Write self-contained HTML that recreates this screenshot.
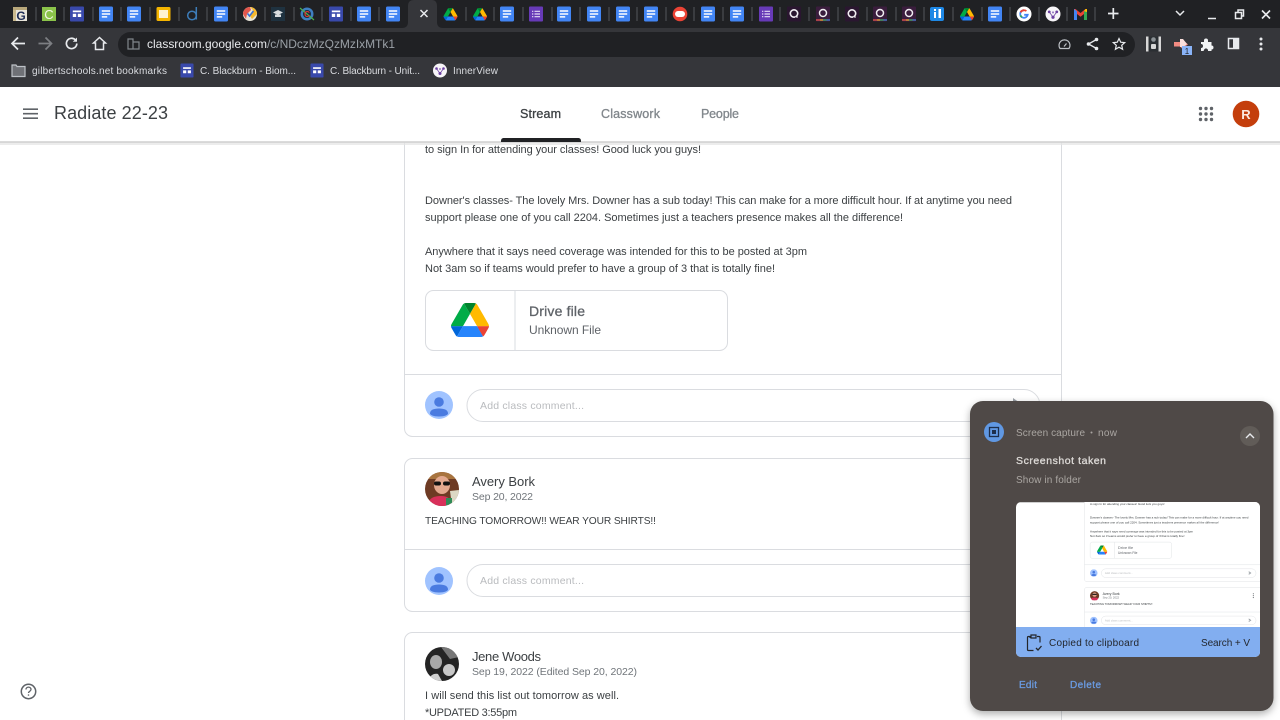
<!DOCTYPE html>
<html lang="en"><head><meta charset="utf-8"><title>Radiate 22-23</title>
<style>
html,body{margin:0;padding:0;width:1280px;height:720px;overflow:hidden;background:#fff}
svg{display:block;filter:blur(.35px)}
text{font-family:"Liberation Sans",sans-serif;white-space:pre}
.b{font-size:11px;fill:#3c4043}
.ph{font-size:10.5px;fill:#b9bbbe}
.n{font-size:13px;fill:#3c4043}
.d{font-size:10.5px;fill:#70757a}
.bm{font-size:10px;fill:#dadce0}
.sep{stroke:#55575b;stroke-width:1}
.nt{font-size:10px;fill:#aaa6a2}
.m{stroke-width:.3px;paint-order:stroke}
</style></head><body>
<svg xmlns="http://www.w3.org/2000/svg" width="1280" height="720" viewBox="0 0 1280 720">
<defs>
<symbol id="doc" viewBox="0 0 14 15"><rect width="14" height="15" rx="1.5" fill="#4285f4"/><path d="M2.800 3.800h8.400v1.500H2.800zM2.800 6.700h8.400v1.500H2.800zM2.800 9.600h5.400v1.500H2.800z" fill="#fff"/></symbol>
<symbol id="site" viewBox="0 0 14 15"><rect width="14" height="15" rx="1" fill="#3949ab"/><path d="M2.800 4h8.400v1.800H2.800zM2.800 7.300h3.400v3.200H2.800zM7.800 7.300h3.400v3.200H7.800z" fill="#fff"/></symbol>
<symbol id="form" viewBox="0 0 14 15"><rect width="14" height="15" rx="1" fill="#673ab7"/><path d="M5.500 4.200H11v1.200H5.500zM5.500 6.900H11v1.200H5.500zM5.500 9.600H11v1.200H5.500zM3 4.200h1.300v1.200H3zM3 6.900h1.300v1.200H3zM3 9.600h1.300v1.200H3z" fill="#e6dcf5"/></symbol>
<symbol id="q" viewBox="0 0 14 15"><rect width="14" height="15" rx="1" fill="#2a1630"/><circle cx="7" cy="7" r="3.700" fill="none" stroke="#f1eef2" stroke-width="1.600"/><path d="M8.500 10.300h2v1.400h-2z" fill="#2a1630"/><circle cx="10" cy="10.500" r=".8" fill="#fff"/></symbol>
<symbol id="qb" viewBox="0 0 14 15"><rect width="14" height="15" rx="1" fill="#3a1d3d"/><circle cx="7" cy="6.500" r="3.500" fill="none" stroke="#f1eef2" stroke-width="1.500"/><path d="M0 12.800h4v1.400H0z" fill="#d9534f"/><path d="M4 12.800h3v1.400H4z" fill="#e9a13b"/><path d="M7 12.800h3.500v1.400H7z" fill="#4aa56b"/><path d="M10.500 12.800H14v1.400h-3.500z" fill="#4a78c9"/></symbol>
<symbol id="dr" viewBox="0 0 87.300 78">
<path d="m6.600 66.850 3.850 6.650c.8 1.400 1.950 2.500 3.300 3.300l13.750-23.800h-27.500c0 1.550.4 3.100 1.200 4.500z" fill="#0066da"/>
<path d="m43.650 25-13.750-23.800c-1.350.8-2.500 1.900-3.300 3.300l-25.400 44a9.060 9.060 0 0 0 -1.200 4.500h27.500z" fill="#00ac47"/>
<path d="m73.550 76.800c1.350-.8 2.500-1.900 3.300-3.300l1.600-2.750 7.650-13.250c.8-1.400 1.200-2.950 1.200-4.500h-27.502l5.852 11.500z" fill="#ea4335"/>
<path d="m43.650 25 13.750-23.800c-1.350-.8-2.900-1.200-4.500-1.200h-18.500c-1.600 0-3.150.45-4.500 1.200z" fill="#00832d"/>
<path d="m59.800 53h-32.300l-13.750 23.800c1.350.8 2.900 1.200 4.500 1.200h50.800c1.600 0 3.150-.45 4.500-1.200z" fill="#2684fc"/>
<path d="m73.400 26.500-12.700-22c-.8-1.400-1.950-2.500-3.300-3.300l-13.750 23.800 16.150 28h27.450c0-1.550-.4-3.100-1.200-4.500z" fill="#ffba00"/>
</symbol>
<symbol id="usr" viewBox="0 0 28 28"><circle cx="14" cy="14" r="14" fill="#a0c3ff"/><circle cx="14" cy="11" r="4.800" fill="#4a7be0"/><path d="M5 22.500c0-3.200 3-5 9-5s9 1.800 9 5c0 1.300-3 3-9 3s-9-1.700-9-3z" fill="#4a7be0"/></symbol>
<symbol id="inner" viewBox="0 0 14 14"><circle cx="7" cy="7" r="7" fill="#f7f5f8"/><circle cx="3.500" cy="5" r="1.300" fill="#6b3fa0"/><circle cx="10.500" cy="5" r="1.300" fill="#6b3fa0"/><circle cx="7" cy="10" r="1.500" fill="#6b3fa0"/><circle cx="7" cy="5.500" r="1" fill="#9a7cc4"/><path d="M3.500 5 7 10l3.500-5" fill="none" stroke="#6b3fa0" stroke-width=".7"/></symbol>
<clipPath id="th"><rect x="1016" y="502" width="244" height="155" rx="5"/></clipPath>
<filter id="sh" x="-10%" y="-10%" width="120%" height="120%"><feDropShadow dx="0" dy="3" stdDeviation="4" flood-color="#000" flood-opacity=".32"/></filter>
<clipPath id="c1"><circle cx="442" cy="489" r="17"/></clipPath>
<clipPath id="c2"><circle cx="442" cy="664" r="17"/></clipPath>
</defs>

<rect width="1280" height="720" fill="#fff"/>

<!-- page content -->
<rect x="404.500" y="100" width="657" height="336.500" rx="8" fill="#fff" stroke="#dadce0"/>
<text class="b" x="425" y="153" textLength="276">to sign In for attending your classes! Good luck you guys!</text>
<text class="b" x="425" y="204" textLength="587">Downer's classes- The lovely Mrs. Downer has a sub today! This can make for a more difficult hour. If at anytime you need</text>
<text class="b" x="425" y="221" textLength="478">support please one of you call 2204. Sometimes just a teachers presence makes all the difference!</text>
<text class="b" x="425" y="255" textLength="382">Anywhere that it says need coverage was intended for this to be posted at 3pm</text>
<text class="b" x="425" y="272" textLength="350">Not 3am so if teams would prefer to have a group of 3 that is totally fine!</text>
<rect x="425.500" y="290.500" width="302" height="60" rx="8" fill="#fff" stroke="#dadce0"/>
<path d="M515 291v59" stroke="#dadce0"/>
<use href="#dr" x="451" y="303" width="38" height="34"/>
<text class="m" x="529" y="316" textLength="56" stroke="#5f6368" style="font-size:14px;fill:#5f6368">Drive file</text>
<text x="529" y="334" textLength="72" style="font-size:12px;fill:#5f6368">Unknown File</text>
<path d="M405 374.500h656" stroke="#dadce0"/>
<use href="#usr" x="425" y="391" width="28" height="28"/>
<rect x="467" y="389.500" width="573" height="32" rx="16" fill="#fff" stroke="#dadce0"/>
<text class="ph" x="480" y="409" textLength="104">Add class comment...</text>
<path d="M1013 398l10 7-10 7v-5l5-2-5-2z" fill="#9aa0a6"/>

<rect x="404.500" y="458.500" width="657" height="153" rx="8" fill="#fff" stroke="#dadce0"/>
<g clip-path="url(#c1)"><rect x="425" y="472" width="34" height="34" fill="#6e3b24"/><path d="M425 472h34v7h-34z" fill="#a8743f"/><ellipse cx="442" cy="485" rx="8" ry="9" fill="#e3a98f"/><rect x="434" y="481.500" width="7" height="4" rx="2" fill="#111"/><rect x="443" y="481.500" width="7" height="4" rx="2" fill="#111"/><path d="M428 506c0-8 6-10 13-10s11 3 11 10z" fill="#d8305a"/><path d="M450 491l9-1v16h-7z" fill="#dcd8c4"/><path d="M446 498h6v8h-6z" fill="#2e8b57"/></g>
<text class="n" x="472" y="486" textLength="63">Avery Bork</text>
<text class="d" x="472" y="500" textLength="61">Sep 20, 2022</text>
<text class="b" x="425" y="524" textLength="231" style="font-size:10.200px">TEACHING TOMORROW!! WEAR YOUR SHIRTS!!</text>
<path d="M405 549.500h656" stroke="#dadce0"/>
<use href="#usr" x="425" y="567" width="28" height="28"/>
<rect x="467" y="564.500" width="573" height="32" rx="16" fill="#fff" stroke="#dadce0"/>
<text class="ph" x="480" y="584" textLength="104">Add class comment...</text>

<rect x="404.500" y="632.500" width="657" height="120" rx="8" fill="#fff" stroke="#dadce0"/>
<g clip-path="url(#c2)"><rect x="425" y="647" width="34" height="34" fill="#242424"/><ellipse cx="436" cy="662" rx="6" ry="7" fill="#a8a8a8"/><ellipse cx="449" cy="670" rx="6" ry="6" fill="#c8c8c8"/><path d="M441 647h18v10l-9 2z" fill="#777"/><path d="M428 681c2-6 6-8 10-7l4 7z" fill="#d0d0d0"/></g>
<text class="n" x="472" y="661" textLength="69">Jene Woods</text>
<text class="d" x="472" y="675" textLength="165">Sep 19, 2022 (Edited Sep 20, 2022)</text>
<text class="b" x="425" y="699" textLength="194">I will send this list out tomorrow as well.</text>
<text class="b" x="425" y="716" textLength="92">*UPDATED 3:55pm</text>

<circle cx="28.500" cy="691.500" r="7.200" fill="none" stroke="#5f6368" stroke-width="1.500"/>
<path d="M26 689.500c0-3.200 5-3.200 5 0 0 1.800-2.500 1.800-2.500 3.500" fill="none" stroke="#5f6368" stroke-width="1.300"/><circle cx="28.500" cy="695" r=".8" fill="#5f6368"/>

<!-- classroom header -->
<rect x="0" y="142" width="1280" height="3" fill="#e4e4e4" opacity=".7"/>
<rect x="0" y="87" width="1280" height="55" fill="#fff"/>
<path d="M0 142h1280" stroke="#cfcfcf" stroke-width="1.500"/>
<path d="M23 109.200h15M23 113.700h15M23 118.200h15" stroke="#5f6368" stroke-width="1.700"/>
<text x="54" y="119" textLength="114" style="font-size:18px;fill:#3c4043">Radiate 22-23</text>
<text class="m" x="520" y="118" textLength="41" stroke="#3c4043" style="font-size:12.500px;fill:#3c4043">Stream</text>
<text class="m" x="601" y="118" textLength="59" stroke="#80868b" style="font-size:12.500px;fill:#80868b">Classwork</text>
<text class="m" x="701" y="118" textLength="38" stroke="#80868b" style="font-size:12.500px;fill:#80868b">People</text>
<path d="M501 142v-1c0-2 1-3 3-3h74c2 0 3 1 3 3v1z" fill="#202124"/>
<g fill="#5f6368"><circle cx="1200.500" cy="108.500" r="1.700"/><circle cx="1206" cy="108.500" r="1.700"/><circle cx="1211.500" cy="108.500" r="1.700"/><circle cx="1200.500" cy="114" r="1.700"/><circle cx="1206" cy="114" r="1.700"/><circle cx="1211.500" cy="114" r="1.700"/><circle cx="1200.500" cy="119.500" r="1.700"/><circle cx="1206" cy="119.500" r="1.700"/><circle cx="1211.500" cy="119.500" r="1.700"/></g>
<circle cx="1246" cy="114" r="13.300" fill="#c43e0c"/>
<text x="1246" y="119" text-anchor="middle" style="font-size:13px;font-weight:bold;fill:#fbe9e0">R</text>

<!-- browser chrome -->
<rect width="1280" height="28" fill="#202124"/>
<rect y="28" width="1280" height="59" fill="#35363a"/>
<path d="M402 28c4 0 6-2 6-6V6c0-4 2-6 6-6h18c3 0 5 2 5 6v16c0 4 2 6 6 6z" fill="#35363a"/>
<path d="M420.500 10l7 7m0-7l-7 7" stroke="#e8eaed" stroke-width="1.500"/>
<path class="sep" d="M36 7v14M64 7v14M93 7v14M121 7v14M150 7v14M179 7v14M207 7v14M236 7v14M265 7v14M294 7v14M322 7v14M351 7v14M379 7v14M466 7v14M494 7v14M523 7v14M552 7v14M580 7v14M609 7v14M637 7v14M666 7v14M694 7v14M723 7v14M752 7v14M780 7v14M809 7v14M838 7v14M867 7v14M896 7v14M924 7v14M953 7v14M982 7v14M1010 7v14M1039 7v14M1067 7v14M1095 7v14"/>

<rect x="13" y="7" width="14" height="14" fill="#e9e5da"/><path d="M13 7h14v3H13z" fill="#b8a77a"/><path d="M13 10h3v11h-3z" fill="#c9b98e"/><text x="21" y="20" text-anchor="middle" style="font-size:12px;font-weight:bold;fill:#1d2c55">G</text>
<rect x="42" y="7" width="14" height="14" fill="#8bc34a"/><text x="49" y="19" text-anchor="middle" style="font-size:13px;fill:#f4f9ea">C</text>
<use href="#site" x="70" y="6.500" width="14" height="15"/>
<use href="#doc" x="99" y="6.500" width="14" height="15"/>
<use href="#doc" x="127" y="6.500" width="14" height="15"/>
<rect x="156.500" y="7" width="14" height="14" rx="1.500" fill="#f4b400"/><rect x="159" y="10" width="9" height="8" fill="#fff3d0"/>
<circle cx="192" cy="15.500" r="4.300" fill="none" stroke="#3d7cb8" stroke-width="1.500"/><path d="M196.300 7v12.500" stroke="#3d7cb8" stroke-width="1.500"/>
<use href="#doc" x="214" y="6.500" width="14" height="15"/>
<circle cx="250" cy="14" r="7" fill="#e8e4d8"/><path d="M243 14a7 7 0 0 1 7-7l1 3-4 4-1 5z" fill="#e2574c"/><path d="M250 7a7 7 0 0 1 7 7l-5 5-2-3 3-6z" fill="#f5b82e"/><path d="M247.500 13.500l2 2.500 4-5" fill="none" stroke="#3b6fd4" stroke-width="1.600"/>
<rect x="271" y="7" width="14" height="14" fill="#1f3240"/><path d="M273 12.500l5-2.500 5 2.500-5 2.500z" fill="#d9dde0"/><path d="M275 14.500v2.500h6v-2.500" fill="#d9dde0"/>
<circle cx="307" cy="14" r="6.500" fill="#3f7fc2"/><circle cx="307" cy="14" r="4" fill="#1c2a3a"/><path d="M300 8l14 12" stroke="#4caf50" stroke-width="1.200"/><text x="307" y="17" text-anchor="middle" style="font-size:8px;font-weight:bold;fill:#e53935">C</text>
<use href="#site" x="329" y="6.500" width="14" height="15"/>
<use href="#doc" x="357" y="6.500" width="14" height="15"/>
<use href="#doc" x="386" y="6.500" width="14" height="15"/>
<use href="#dr" x="443.500" y="8" width="14" height="12.500"/>
<use href="#dr" x="473" y="8" width="14" height="12.500"/>
<use href="#doc" x="500" y="6.500" width="14" height="15"/>
<use href="#form" x="529" y="6.500" width="14" height="15"/>
<use href="#doc" x="557" y="6.500" width="14" height="15"/>
<use href="#doc" x="587" y="6.500" width="14" height="15"/>
<use href="#doc" x="616" y="6.500" width="14" height="15"/>
<use href="#doc" x="644" y="6.500" width="14" height="15"/>
<circle cx="680" cy="14" r="7.300" fill="#ea4335"/><rect x="675" y="11" width="10" height="6" rx="3" fill="#fff"/>
<use href="#doc" x="701" y="6.500" width="14" height="15"/>
<use href="#doc" x="730" y="6.500" width="14" height="15"/>
<use href="#form" x="759" y="6.500" width="14" height="15"/>
<use href="#q" x="787" y="6.500" width="14" height="15"/>
<use href="#qb" x="816" y="6.500" width="14" height="15"/>
<use href="#q" x="845" y="6.500" width="14" height="15"/>
<use href="#qb" x="873" y="6.500" width="14" height="15"/>
<use href="#qb" x="902" y="6.500" width="14" height="15"/>
<rect x="930" y="7" width="14" height="14" rx="2" fill="#1e88e5"/><path d="M934 12h2v6h-2zM934 9h2v2h-2zM938.500 9h2.500v9h-2.500z" fill="#fff"/>
<use href="#dr" x="960" y="8" width="14" height="12.500"/>
<use href="#doc" x="988" y="6.500" width="14" height="15"/>
<circle cx="1024" cy="14" r="7.500" fill="#fff"/><path d="M1024 10.200a3.800 3.800 0 1 0 3.700 4.600h-3.500" fill="none" stroke="#4285f4" stroke-width="1.800"/><path d="M1020.600 12.300a3.800 3.800 0 0 1 5.800-1.200" fill="none" stroke="#ea4335" stroke-width="1.800"/><path d="M1020.400 15.500l1.500 1.800" stroke="#34a853" stroke-width="1.800"/>
<use href="#inner" x="1045.500" y="6.500" width="15" height="15"/>
<path d="M1074 20V9h1.500l5 4 5-4h1.500v11h-3v-6l-3.500 2.800-3.500-2.800v6z" fill="#ea4335"/><path d="M1074 20V9l3 2.200V20z" fill="#4285f4"/><path d="M1087 20V9l-3 2.200V20z" fill="#34a853"/><path d="M1084 11.200L1085.500 9h1.500v3z" fill="#fbbc04"/>
<path d="M1108 13.500h10.500M1113.300 8v11" stroke="#e8eaed" stroke-width="1.700"/>
<path d="M1176 11l4 4 4-4" fill="none" stroke="#e8eaed" stroke-width="1.500"/>
<path d="M1208 18.500h8" stroke="#e8eaed" stroke-width="1.500"/>
<path d="M1235.500 12.500h6v6h-6zM1238 12.500v-2.500h5.500v6h-2" fill="none" stroke="#e8eaed" stroke-width="1.500"/>
<path d="M1262 10.500l8 8m0-8l-8 8" stroke="#e8eaed" stroke-width="1.600"/>

<path d="M25 43.500H12.500M18 37.500l-6 6 6 6" fill="none" stroke="#e8eaed" stroke-width="1.700"/>
<path d="M38.500 43.500H51M45.500 37.500l6 6-6 6" fill="none" stroke="#7d7f83" stroke-width="1.700"/>
<path d="M76.800 43.500a5.200 5.200 0 1 1-1.500-3.700" fill="none" stroke="#e8eaed" stroke-width="1.700"/><path d="M77 37.500v4.200h-4.200z" fill="#e8eaed"/>
<path d="M93.500 43l6-5.500 6 5.500h-2v6.500h-8V43z" fill="none" stroke="#e8eaed" stroke-width="1.500"/>

<rect x="118" y="32" width="1017" height="25" rx="12.500" fill="#202124"/>
<path d="M128 39h5v10h-5zM133 42h6v7h-6z" fill="none" stroke="#80868b" stroke-width="1.200"/>
<text x="147" y="48" textLength="120" style="font-size:12px;fill:#e8eaed">classroom.google.com</text>
<text x="267" y="48" textLength="128" style="font-size:12px;fill:#9aa0a6">/c/NDczMzQzMzIxMTk1</text>
<path d="M1060 48.500a5.500 5.500 0 1 1 9 0z" fill="none" stroke="#bdc1c6" stroke-width="1.200"/><path d="M1064 46.500l2.500-3" stroke="#bdc1c6" stroke-width="1.200"/>
<path d="M1096.500 39.500l-8 4.500 8 4.500" fill="none" stroke="#e8eaed" stroke-width="1.300"/><circle cx="1096.500" cy="39.500" r="1.800" fill="#e8eaed"/><circle cx="1088.500" cy="44" r="1.800" fill="#e8eaed"/><circle cx="1096.500" cy="48.500" r="1.800" fill="#e8eaed"/>
<path d="M1119 38.500l1.700 3.700 4 .4-3 2.700.9 4-3.600-2.100-3.600 2.100.9-4-3-2.700 4-.4z" fill="none" stroke="#e8eaed" stroke-width="1.200"/>

<rect x="1146" y="36.500" width="15" height="15" fill="#d7d7d7"/><rect x="1148.500" y="36.500" width="10" height="15" fill="#2b2f33"/><circle cx="1153.500" cy="39.500" r="2.300" fill="#8c9296"/><rect x="1151" y="44" width="5" height="5" rx="1" fill="#d7d7d7"/>
<path d="M1174 42h6l2-3 6 5.500-6 4-2-2h-6z" fill="#f28b82"/><path d="M1180 39h3l4 5-4 3h-3z" fill="#fbe0dd"/>
<rect x="1182" y="46" width="10" height="9" fill="#8ab4f8"/><text x="1187" y="54" text-anchor="middle" style="font-size:8px;fill:#202124">1</text>
<path d="M1201 42h3v-1.500a2 2 0 0 1 4 0V42h3.500v3.500a2 2 0 0 1 0 4V51H1208a2 2 0 0 0-4-1l-.5 1H1201v-3a2 2 0 0 0 0-4z" fill="#f1f3f4"/>
<rect x="1228.500" y="38.500" width="10" height="10" fill="none" stroke="#e8eaed" stroke-width="1.500"/><rect x="1233" y="38.500" width="5.500" height="10" fill="#e8eaed"/>
<g fill="#e8eaed"><circle cx="1261" cy="39" r="1.500"/><circle cx="1261" cy="44" r="1.500"/><circle cx="1261" cy="49" r="1.500"/></g>

<path d="M12 65h4l1 1.500h8v10H12z" fill="#6f7176" stroke="#bdc1c6" stroke-width="1.200"/>
<text class="bm" x="32" y="74" textLength="135">gilbertschools.net bookmarks</text>
<use href="#site" x="180" y="63.500" width="14" height="14"/>
<text class="bm" x="200" y="74" textLength="96">C. Blackburn - Biom...</text>
<use href="#site" x="310" y="63.500" width="14" height="14"/>
<text class="bm" x="330" y="74" textLength="90">C. Blackburn - Unit...</text>
<use href="#inner" x="433" y="63.500" width="14" height="14"/>
<text class="bm" x="453" y="74" textLength="45">InnerView</text>

<!-- notification -->
<rect x="970" y="401" width="303.500" height="310" rx="13" fill="#4f4a46" filter="url(#sh)"/>
<circle cx="994" cy="432" r="10" fill="#6098e3"/><rect x="989.500" y="427.500" width="9" height="9" fill="none" stroke="#1d2f4d" stroke-width="1.300"/><rect x="992" y="430" width="4" height="4" fill="#1d2f4d"/>
<text class="nt" x="1016" y="436" textLength="69">Screen capture</text>
<circle cx="1091.500" cy="432.500" r="1" fill="#aaa6a2"/>
<text class="nt" x="1098" y="436" textLength="19">now</text>
<circle cx="1250" cy="436" r="10" fill="#615c58"/><path d="M1246 438l4-4 4 4" fill="none" stroke="#e8eaed" stroke-width="1.400"/>
<text class="m" x="1016" y="464" textLength="90" stroke="#dedbd8" style="font-size:10.500px;fill:#dedbd8">Screenshot taken</text>
<text class="nt" x="1016" y="483" textLength="65">Show in folder</text>

<g clip-path="url(#th)">
<rect x="1016" y="502" width="244" height="155" fill="#fff"/>
<path d="M1016 502.500h244" stroke="#cfcfcf"/>
<rect x="1088" y="501" width="22" height="2" fill="#555"/>
<g transform="translate(975.230 463.660) scale(.27)">
<rect x="404.500" y="100" width="657" height="336.500" rx="8" fill="#fff" stroke="#dadce0" stroke-width="1.500"/>
<text class="b" x="425" y="153" textLength="276">to sign In for attending your classes! Good luck you guys!</text>
<text class="b" x="425" y="204" textLength="587">Downer's classes- The lovely Mrs. Downer has a sub today! This can make for a more difficult hour. If at anytime you need</text>
<text class="b" x="425" y="221" textLength="478">support please one of you call 2204. Sometimes just a teachers presence makes all the difference!</text>
<text class="b" x="425" y="255" textLength="382">Anywhere that it says need coverage was intended for this to be posted at 3pm</text>
<text class="b" x="425" y="272" textLength="350">Not 3am so if teams would prefer to have a group of 3 that is totally fine!</text>
<rect x="425.500" y="290.500" width="302" height="60" rx="8" fill="#fff" stroke="#dadce0" stroke-width="1.500"/>
<path d="M515 291v59" stroke="#dadce0" stroke-width="1.500"/>
<use href="#dr" x="451" y="303" width="38" height="34"/>
<text x="529" y="316" textLength="56" style="font-size:14px;fill:#5f6368">Drive file</text>
<text x="529" y="334" textLength="72" style="font-size:12px;fill:#5f6368">Unknown File</text>
<path d="M405 374.500h656" stroke="#dadce0" stroke-width="1.500"/>
<use href="#usr" x="425" y="391" width="28" height="28"/>
<rect x="467" y="389.500" width="573" height="32" rx="16" fill="#fff" stroke="#dadce0" stroke-width="1.500"/>
<text class="ph" x="480" y="409" textLength="104">Add class comment...</text>
<path d="M1013 398l10 7-10 7v-5l5-2-5-2z" fill="#9aa0a6"/>
<rect x="404.500" y="458.500" width="657" height="153" rx="8" fill="#fff" stroke="#dadce0" stroke-width="1.500"/>
<circle cx="442" cy="489" r="17" fill="#6e3b24"/><circle cx="442" cy="485" r="8" fill="#e0a68e"/><rect x="434" y="482" width="16" height="4" fill="#111"/><path d="M428 500c4-6 24-6 28 0l-6 6h-16z" fill="#d8305a"/>
<text class="n" x="472" y="486" textLength="63">Avery Bork</text>
<text class="d" x="472" y="500" textLength="61">Sep 20, 2022</text>
<g fill="#5f6368"><circle cx="1030" cy="482" r="2"/><circle cx="1030" cy="489" r="2"/><circle cx="1030" cy="496" r="2"/></g>
<text class="b" x="425" y="524" textLength="231" style="font-size:10.200px">TEACHING TOMORROW!! WEAR YOUR SHIRTS!!</text>
<path d="M405 549.500h656" stroke="#dadce0" stroke-width="1.500"/>
<use href="#usr" x="425" y="567" width="28" height="28"/>
<rect x="467" y="564.500" width="573" height="32" rx="16" fill="#fff" stroke="#dadce0" stroke-width="1.500"/>
<text class="ph" x="480" y="584" textLength="104">Add class comment...</text>
<path d="M1013 573l10 7-10 7v-5l5-2-5-2z" fill="#9aa0a6"/>
</g>
<rect x="1016" y="627" width="244" height="30" fill="#82aef0"/>
</g>
<path d="M1030 638v-1.500h-1.500a1 1 0 0 0-1 1v12a1 1 0 0 0 1 1h5M1037 636.500h2a1 1 0 0 1 1 1v5M1031 635h5v3h-5z" fill="none" stroke="#23262b" stroke-width="1.200"/><path d="M1036 648l2 2 3.500-4" fill="none" stroke="#23262b" stroke-width="1.300"/>
<text x="1049" y="646" textLength="90" style="font-size:10px;fill:#23272e">Copied to clipboard</text>
<text x="1201" y="646" textLength="49" style="font-size:10px;fill:#23272e">Search + V</text>
<text class="m" x="1019" y="688" textLength="18" stroke="#6a9ae0" style="font-size:10px;fill:#6a9ae0">Edit</text>
<text class="m" x="1070" y="688" textLength="31" stroke="#6a9ae0" style="font-size:10px;fill:#6a9ae0">Delete</text>
</svg>
</body></html>
